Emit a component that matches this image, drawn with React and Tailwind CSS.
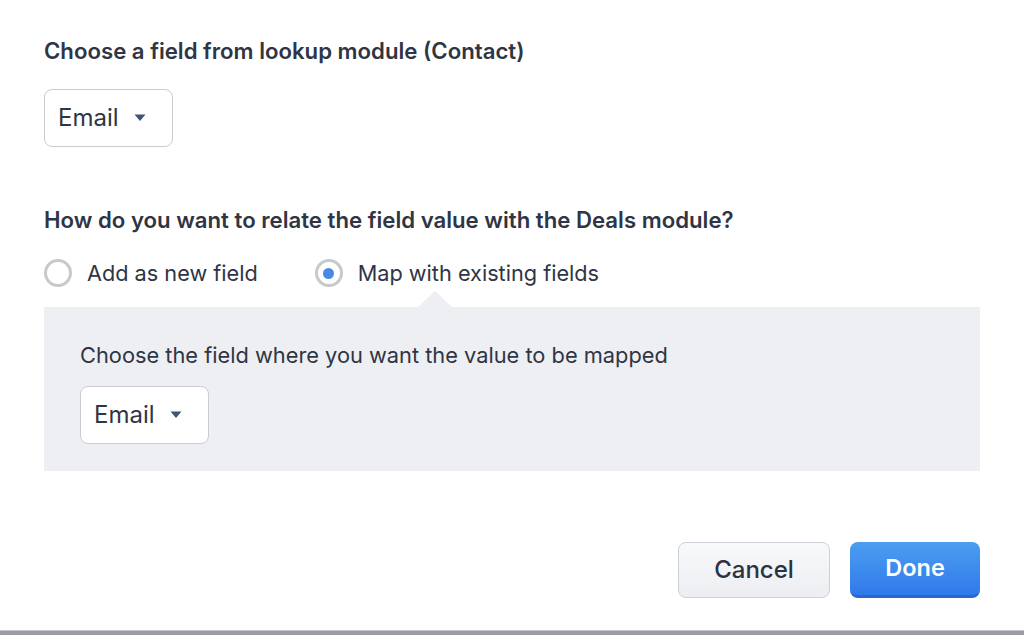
import React, { useState } from "react";

const Caret = () => (
  <svg width="12" height="8" viewBox="0 0 12 8" className="ml-[15px]">
    <path d="M0.5 0.5 L11.5 0.5 L6 7 Z" fill="#3f5670" />
  </svg>
);

const Dropdown = ({ value }) => (
  <button className="flex items-center h-[58px] w-[129px] pl-[13px] rounded-[8px] border border-[#c9ccd2] bg-white text-[24px] text-[#2f3544]">
    {value}
    <Caret />
  </button>
);

const Radio = ({ checked, label, onClick }) => (
  <label className="flex items-center cursor-pointer" onClick={onClick}>
    <span className="flex items-center justify-center w-[28px] h-[28px] rounded-full border-[3px] border-[#c7c9cd] bg-white">
      {checked && <span className="w-[11px] h-[11px] rounded-full bg-[#4a88e8]" />}
    </span>
    <span className="ml-[15px] text-[21.7px] text-[#2f3544]">{label}</span>
  </label>
);

const App = () => {
  const [mode, setMode] = useState("map");

  return (
    <div className="w-[1024px] h-[635px] bg-white flex flex-col font-['Inter',sans-serif]">
      <div className="flex-1 pl-[44px] pr-[44px] pt-[36px]">
        {/* lookup field */}
        <h2 className="text-[22.2px] font-semibold text-[#2f3544] leading-[30px]">
          Choose a field from lookup module (Contact)
        </h2>
        <div className="mt-[23px]">
          <Dropdown value="Email" />
        </div>

        {/* relate */}
        <h2 className="mt-[58px] text-[22.2px] font-semibold text-[#2f3544] leading-[30px]">
          How do you want to relate the field value with the Deals module?
        </h2>
        <div className="mt-[22px] flex items-center">
          <Radio checked={mode === "new"} label="Add as new field" onClick={() => setMode("new")} />
          <div className="ml-[57px]">
            <Radio checked={mode === "map"} label="Map with existing fields" onClick={() => setMode("map")} />
          </div>
        </div>

        <div className="relative mt-[17px] w-[936px] h-[164px] bg-[#edeff3] pl-[36px] pt-[33px]">
          <div className="absolute -top-[16px] left-[374px] w-0 h-0 border-l-[17px] border-r-[17px] border-b-[16px] border-l-transparent border-r-transparent border-b-[#edeff3]" />
          <p className="text-[21.8px] text-[#2f3544] leading-[30px]">
            Choose the field where you want the value to be mapped
          </p>
          <div className="mt-[16px]">
            <Dropdown value="Email" />
          </div>
        </div>

        <div className="mt-[71px] flex justify-end gap-[20px] w-[936px]">
          <button className="w-[152px] h-[56px] rounded-[8px] border border-[#cdd0d8] bg-gradient-to-b from-[#f8f9fb] to-[#eceef2] text-[24px] font-medium text-[#2d3240]">
            Cancel
          </button>
          <button className="w-[130px] h-[56px] rounded-[8px] border-b-[3px] border-[#2a66cc] bg-gradient-to-b from-[#4b9ef0] to-[#3179ea] text-[23.5px] font-semibold text-white">
            Done
          </button>
        </div>
      </div>
      <div className="h-[5px] bg-[#9b9ca2] border-t border-[#c4c5c9]" />
    </div>
  );
};

export default App;
